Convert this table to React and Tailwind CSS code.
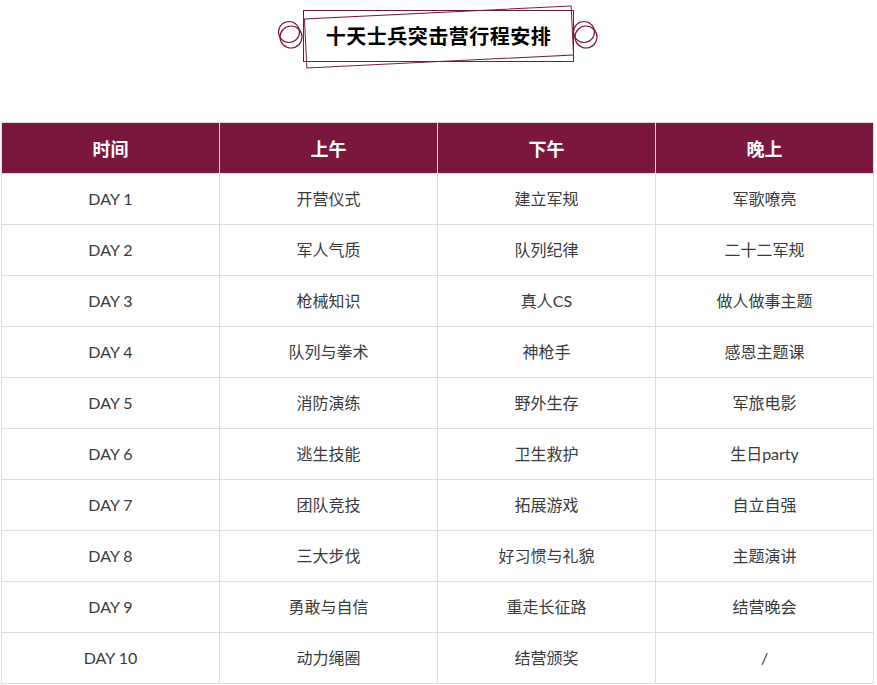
import React from 'react';

const rows = [
  ['DAY 1', '开营仪式', '建立军规', '军歌嘹亮'],
  ['DAY 2', '军人气质', '队列纪律', '二十二军规'],
  ['DAY 3', '枪械知识', '真人CS', '做人做事主题'],
  ['DAY 4', '队列与拳术', '神枪手', '感恩主题课'],
  ['DAY 5', '消防演练', '野外生存', '军旅电影'],
  ['DAY 6', '逃生技能', '卫生救护', '生日party'],
  ['DAY 7', '团队竞技', '拓展游戏', '自立自强'],
  ['DAY 8', '三大步伐', '好习惯与礼貌', '主题演讲'],
  ['DAY 9', '勇敢与自信', '重走长征路', '结营晚会'],
  ['DAY 10', '动力绳圈', '结营颁奖', '/'],
];

const headers = ['时间', '上午', '下午', '晚上'];

// Two overlapping rings on each side of the title box
const Rings = ({ className }) => (
  <svg className={className} width="30" height="34" viewBox="0 0 30 34" fill="none">
    <circle cx="13" cy="13" r="10.5" stroke="#7b173e" strokeWidth="1.2" />
    <circle cx="15" cy="18" r="11" stroke="#7b173e" strokeWidth="1.2" />
  </svg>
);

const App = () => {
  return (
    <div className="w-[877px] h-[685px] bg-white" style={{ fontFamily: "Lato, 'Noto Sans CJK SC', sans-serif" }}>
      {/* Title */}
      <div className="h-[122px] pt-[10px] flex justify-center">
        <div className="relative w-[271px] h-[52px] border border-[#7b173e] flex items-center justify-center">
          <div className="absolute left-[1px] top-[1px] w-[268px] h-[50px] border border-[#7b173e] -rotate-[2.8deg]" />
          <Rings className="absolute left-[-28px] top-[8px]" />
          <Rings className="absolute right-[-28px] top-[8px]" />
          <span className="relative text-[20px] font-bold text-black tracking-[0.5px]" style={{ fontFamily: "'Noto Sans CJK SC', sans-serif" }}>
            十天士兵突击营行程安排
          </span>
        </div>
      </div>

      {/* Schedule table */}
      <table className="ml-px w-[872px] border-collapse table-fixed">
        <colgroup>
          <col className="w-[218px]" />
          <col className="w-[218px]" />
          <col className="w-[218px]" />
          <col className="w-[218px]" />
        </colgroup>
        <thead>
          <tr className="h-[51px] bg-[#7b173e]">
            {headers.map((h) => (
              <th
                key={h}
                className="border border-[#e3d6dc] text-white text-[18px] font-bold"
                style={{ fontFamily: "'Noto Sans CJK SC', sans-serif" }}
              >
                {h}
              </th>
            ))}
          </tr>
        </thead>
        <tbody>
          {rows.map((row) => (
            <tr key={row[0]} className="h-[51px]">
              {row.map((cell, i) => (
                <td key={i} className="border border-[#dddddd] text-center text-[16px] text-[#3a3a3a]">
                  {cell}
                </td>
              ))}
            </tr>
          ))}
        </tbody>
      </table>
    </div>
  );
};

export default App;
